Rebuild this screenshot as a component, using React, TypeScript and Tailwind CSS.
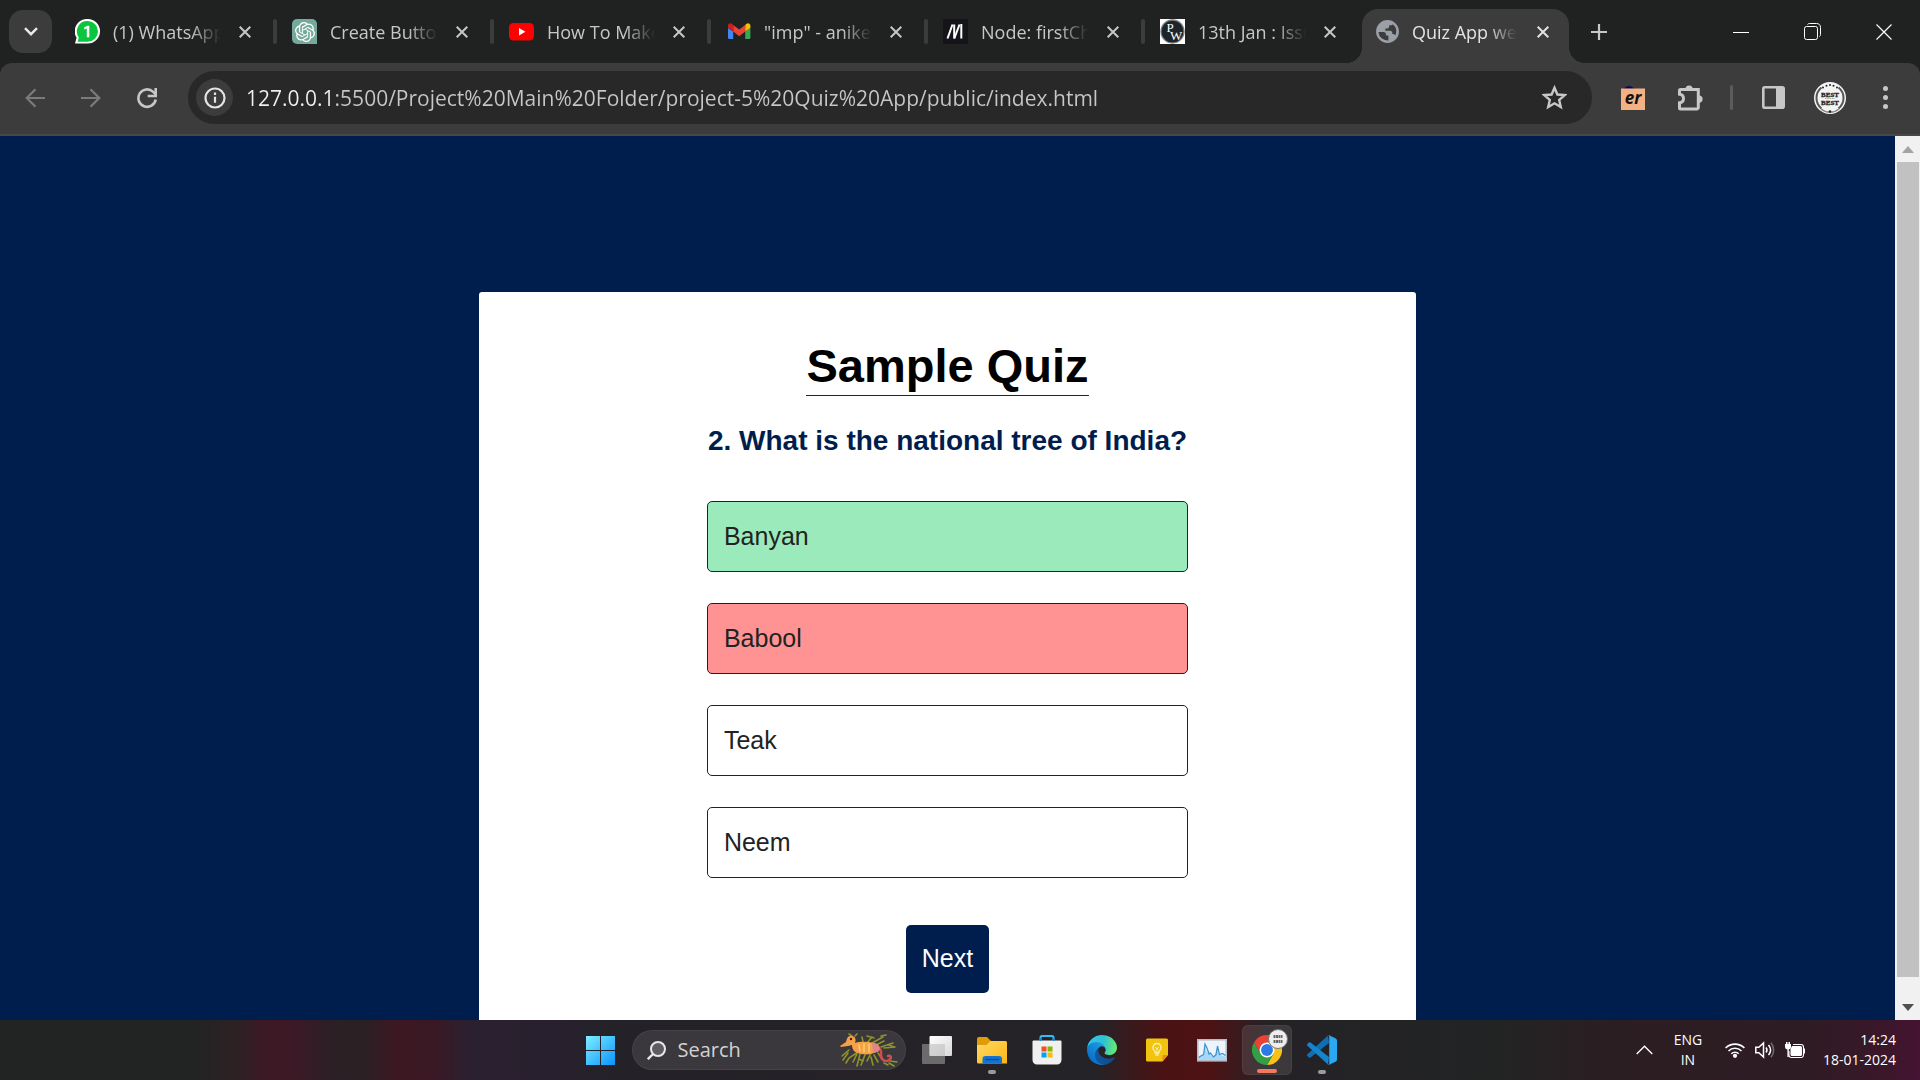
import type { ReactNode } from "react";
import { SiOpenai } from "react-icons/si";

const WhatsAppIcon = () => (
  <svg viewBox="0 0 25 25" className="h-full w-full">
    <path d="M12.5 0A12.3 12.3 0 0 1 25 12.4 12.3 12.3 0 0 1 12.5 24.6H0l1.6-5.8A12.3 12.3 0 0 1 12.5 0Z" fill="#fff" />
    <path d="M12.6 2A10.4 10.4 0 0 1 23 12.4 10.4 10.4 0 0 1 12.6 22.8H2.6l1.2-4.4A10.4 10.4 0 0 1 12.6 2Z" fill="#0ac63e" />
    <path d="M9.2 8.2l3.4-1.5h1.7v11.6h-2.5V9.6l-2.6.8Z" fill="#fff" />
  </svg>
);

const GptIcon = () => (
  <span className="flex h-full w-full items-center justify-center rounded-[5px] rounded-br-none bg-[#75a99c] text-white">
    <SiOpenai size={20} />
  </span>
);

const YoutubeIcon = () => (
  <svg viewBox="0 0 25 25" className="h-full w-full">
    <rect y="4" width="25" height="17.5" rx="4.5" fill="#f00" />
    <path d="M10 9v7.4l6.4-3.7Z" fill="#fff" />
  </svg>
);

const GmailIcon = () => (
  <svg viewBox="0 0 25 25" className="h-full w-full">
    <path d="M2 9v9.400c0 .9.7 1.600 1.600 1.600h3.600V12.400Z" fill="#4285f4" />
    <path d="M19.200 12.400V20h3.600c.9 0 1.600-.7 1.600-1.600V8.600Z" fill="#34a853" />
    <path d="M19.200 6v6.600l5.200-3.900V6.600c0-2.200-2.300-3.100-3.900-1.900Z" fill="#fbbc04" />
    <path d="M7.200 12.600V6l6 4.600 6-4.600v6.600l-6 4.600Z" fill="#ea4335" />
    <path d="M2 6.600v2.100l5.200 3.900V6L5.900 4.700C4.300 3.500 2 4.400 2 6.600Z" fill="#c5221f" />
  </svg>
);

const MdnIcon = () => (
  <svg viewBox="0 0 25 25" className="h-full w-full">
    <rect width="25" height="25" fill="#15141a" />
    <g fill="none" stroke="#fff" strokeWidth="2">
      <path d="M4.500 19.500L9.500 5.500" />
      <path d="M11.200 5.500v14" />
      <path d="M11.300 19.500L16.500 5.500" />
      <path d="M18.300 5v14.500" />
    </g>
  </svg>
);

const PwIcon = () => (
  <svg viewBox="0 0 25 25" className="h-full w-full">
    <rect width="25" height="25" fill="#fff" />
    <circle cx="12.500" cy="12.500" r="11.500" fill="#1d2529" stroke="#7b8184" strokeWidth="1.300" />
    <text x="6.500" y="12.500" fontFamily="Liberation Serif, serif" fontSize="13" fill="#fff">P</text>
    <text x="10" y="21" fontFamily="Liberation Serif, serif" fontSize="13" fill="#fff">W</text>
  </svg>
);

const GlobeIcon = () => (
  <svg viewBox="0 0 24 24" className="h-full w-full">
    <path
      fill="#9aa0a6"
      d="M12 1a11 11 0 1 0 0 22 11 11 0 0 0 0-22Zm-8.700 11.500h4.900c1.500 0 2.300 1 2.300 2.200v1.100h2.400v4.800A8.700 8.700 0 0 1 3.300 12.500Zm16.300 3.300c-.8-1-1.700-1.300-3-1.300v-1.300c0-1.200-.9-2-2.100-2H10V9h1.700c1.100 0 1.900-.8 1.900-1.900V6h2c.7 0 1.200-.4 1.400-1a8.700 8.700 0 0 1 2.600 10.800Z"
    />
  </svg>
);

const CloseIcon = () => (
  <svg viewBox="0 0 12 12" className="h-3 w-3" fill="none" stroke="currentColor" strokeWidth="2">
    <path d="M.7.7l10.600 10.600M11.300.7L.7 11.300" />
  </svg>
);

const tabs: { title: string; icon: ReactNode }[] = [
  { title: "(1) WhatsApp", icon: <WhatsAppIcon /> },
  { title: "Create Button", icon: <GptIcon /> },
  { title: "How To Make", icon: <YoutubeIcon /> },
  { title: "\"imp\" - aniket", icon: <GmailIcon /> },
  { title: "Node: firstChild", icon: <MdnIcon /> },
  { title: "13th Jan : Issue", icon: <PwIcon /> },
];

const fade = "[mask-image:linear-gradient(to_right,#000_72%,transparent)]";

function TabStrip() {
  return (
    <header className="flex h-[63px] items-center bg-[#202121] text-[#c7c7c7]">
      <button aria-label="Search tabs" className="ml-[9px] flex h-[43px] w-[43px] shrink-0 items-center justify-center rounded-[14px] bg-[#3c3c3c] text-[#e8e8e8]">
        <svg viewBox="0 0 14 9" className="h-[9px] w-[14px]" fill="none" stroke="currentColor" strokeWidth="2.400">
          <path d="M1 1.200l6 6 6-6" />
        </svg>
      </button>
      <div className="ml-2 flex min-w-0">
        {tabs.map((t) => (
          <div key={t.title} className="group flex h-[25px] w-[217px] min-w-0 items-center pl-[15px]">
            <span className="h-[25px] w-[25px] shrink-0">{t.icon}</span>
            <span className={`ml-[13px] min-w-0 flex-1 overflow-hidden whitespace-nowrap text-[18px] leading-6 ${fade}`}>{t.title}</span>
            <button aria-label={`Close ${t.title}`} className="mr-[22px] ml-[18px] shrink-0">
              <CloseIcon />
            </button>
            <span className="h-[25px] w-1 shrink-0 rounded-sm bg-[#3c3c3c] group-last:invisible" />
          </div>
        ))}
      </div>
      <div className="relative flex h-[54px] w-[207px] shrink-0 items-center self-end rounded-t-[16px] bg-[#3c3c3c] pb-[9px] pl-[13px] text-[#e3e3e3]">
        <span className="absolute bottom-0 -left-4 h-4 w-4 bg-[radial-gradient(circle_at_0_0,transparent_16px,#3c3c3c_16px)]" />
        <span className="absolute bottom-0 -right-4 h-4 w-4 bg-[radial-gradient(circle_at_100%_0,transparent_16px,#3c3c3c_16px)]" />
        <span className="h-[25px] w-[25px] shrink-0"><GlobeIcon /></span>
        <span className={`ml-3 min-w-0 flex-1 overflow-hidden whitespace-nowrap text-[18px] leading-6 ${fade}`}>Quiz App website</span>
        <button aria-label="Close Quiz App" className="mr-5 ml-5 shrink-0"><CloseIcon /></button>
      </div>
      <button aria-label="New tab" className="ml-[22px] shrink-0">
        <svg viewBox="0 0 16 16" className="h-4 w-4" stroke="currentColor" strokeWidth="2.200"><path d="M8 0v16M0 8h16" /></svg>
      </button>
      <div className="mr-7 ml-auto flex shrink-0 items-center gap-[55px] text-white">
        <button aria-label="Minimize">
          <svg viewBox="0 0 16 16" className="h-4 w-4" stroke="currentColor"><path d="M0 8.500h16" /></svg>
        </button>
        <button aria-label="Restore">
          <svg viewBox="0 0 17 17" className="h-[17px] w-[17px]" fill="none" stroke="currentColor">
            <rect x=".5" y="3.500" width="13" height="13" rx="2" />
            <path d="M3.500 1.500c.5-.7 1-1 2-1h7c2.500 0 4 1.500 4 4v7c0 1-.3 1.500-1 2" />
          </svg>
        </button>
        <button aria-label="Close window">
          <svg viewBox="0 0 16 16" className="h-4 w-4" stroke="currentColor" strokeWidth="1.200"><path d="M.5.5l15 15M15.500.5l-15 15" /></svg>
        </button>
      </div>
    </header>
  );
}

function Avatar() {
  return (
    <svg viewBox="0 0 32 32" className="h-8 w-8">
      <circle cx="16" cy="16" r="16" fill="#f4f4f4" />
      <path d="M7.500 5.500a13.500 13.500 0 0 0 0 21M24.500 5.500a13.500 13.500 0 0 1 0 21" fill="none" stroke="#555" strokeWidth="2" />
      <path d="M7 27a14 14 0 0 0 18 0" fill="none" stroke="#888" strokeWidth="1.500" />
      <g fill="#222">
        <circle cx="9" cy="5.500" r="1" />
        <circle cx="12.500" cy="3.700" r="1" />
        <circle cx="16" cy="3" r="1" />
        <circle cx="19.500" cy="3.700" r="1" />
        <circle cx="23" cy="5.500" r="1" />
        <circle cx="16" cy="29.500" r="1.300" />
      </g>
      <g fontFamily="Liberation Serif, serif" fontSize="7" fontWeight="700" fill="#222" textAnchor="middle">
        <text x="16" y="14.500" stroke="#222" strokeWidth=".3">BEST</text>
        <text x="16" y="23" stroke="#222" strokeWidth=".3">BEST</text>
      </g>
      <path d="M11 16.500h10" stroke="#999" strokeDasharray="1 .7" />
    </svg>
  );
}

function Toolbar() {
  return (
    <div className="bg-[#202121]">
      <div className="flex h-[73px] items-center rounded-t-[12px] border-b-2 border-[#474747] bg-[#3c3c3c] pt-px pb-[3px] pl-[25px] text-[#c7c7c7]">
        <button aria-label="Back" className="text-[#7b7b7b]">
          <svg viewBox="0 0 20 20" className="h-5 w-5" fill="none" stroke="currentColor" strokeWidth="2.200"><path d="M20 10H2M10.500 1.200L1.700 10l8.800 8.800" /></svg>
        </button>
        <button aria-label="Forward" className="ml-9 text-[#7b7b7b]">
          <svg viewBox="0 0 20 20" className="h-5 w-5" fill="none" stroke="currentColor" strokeWidth="2.200"><path d="M0 10h18M9.500 1.200l8.800 8.800-8.800 8.800" /></svg>
        </button>
        <button aria-label="Reload" className="ml-[35px]">
          <svg viewBox="0 0 22 22" className="h-[22px] w-[22px]" fill="none" stroke="currentColor" strokeWidth="2.600">
            <path d="M19.700 12.500A8.700 8.700 0 1 1 17.200 4.900L19.500 7.200" />
            <path d="M19.700 1v8h-8" />
          </svg>
        </button>
        <div className="ml-[30px] flex h-[53px] min-w-0 flex-1 items-center rounded-full bg-[#282828] pr-[25px] pl-2">
          <button aria-label="Site information" className="flex h-[37px] w-[37px] shrink-0 items-center justify-center rounded-full bg-[#3c3c3c] text-[#e3e3e3]">
            <svg viewBox="0 0 22 22" className="h-[22px] w-[22px]" fill="none" stroke="currentColor" strokeWidth="2.200">
              <circle cx="11" cy="11" r="9.500" />
              <path d="M11 9.800v6M11 5.600v2.400" />
            </svg>
          </button>
          <label htmlFor="address" className="sr-only">Address</label>
          <input
            id="address"
            readOnly
            value="127.0.0.1:5500/Project%20Main%20Folder/project-5%20Quiz%20App/public/index.html"
            className="ml-[13px] h-7 min-w-0 flex-1 bg-[linear-gradient(to_right,#f0f0f0_84px,#c7c7c7_84px)] bg-clip-text text-[21px] leading-7 text-transparent outline-none"
          />
          <button aria-label="Bookmark this page" className="shrink-0">
            <svg viewBox="0 0 25 25" className="h-[25px] w-[25px]" fill="none" stroke="currentColor" strokeWidth="2.400">
              <path d="M12.500 2.800l2.900 6.700 7.300.6-5.500 4.800 1.600 7.100-6.300-3.700-6.300 3.700 1.600-7.100-5.500-4.800 7.300-.6Z" />
            </svg>
          </button>
        </div>
        <button aria-label="er extension" className="ml-[29px] shrink-0">
          <svg viewBox="0 0 24 24" className="h-6 w-6">
            <path d="M3 3c2-4 8-4 10 0Z" fill="#0a0a5c" />
            <rect y="2.500" width="24" height="21.500" fill="#f4b183" />
            <text x="12" y="17.500" textAnchor="middle" fontFamily="Open Sans, sans-serif" fontSize="17" fontStyle="italic" fontWeight="700" fill="#111">er</text>
          </svg>
        </button>
        <button aria-label="Extensions" className="ml-8 shrink-0">
          <svg viewBox="0 0 27 27" className="h-[27px] w-[27px]">
            <path d="M3.500 5.500h17.800V23.500a1.500 1.500 0 0 1-1.500 1.500H3.500a1 1 0 0 1-1-1v-5.200c2.500-.3 4-2 4-4.300s-1.500-4-4-4.300V6.500a1 1 0 0 1 1-1Z" fill="none" stroke="currentColor" strokeWidth="3" />
            <path d="M8.500 5a3.600 3.600 0 0 1 7.200 0ZM22 11.500a3.600 3.600 0 0 1 0 7.200Z" fill="currentColor" />
          </svg>
        </button>
        <span className="ml-[26px] h-[25px] w-[3px] shrink-0 rounded-full bg-[#5c5c5c]" />
        <button aria-label="Side panel" className="ml-[29px] shrink-0">
          <svg viewBox="0 0 23 23" className="h-[23px] w-[23px]">
            <rect x="1.300" y="1.300" width="20.400" height="20.400" rx="1.500" fill="none" stroke="currentColor" strokeWidth="2.600" />
            <path d="M14 1h8v21h-8Z" fill="currentColor" />
          </svg>
        </button>
        <button aria-label="Profile" className="ml-[29px] shrink-0"><Avatar /></button>
        <button aria-label="Menu" className="mr-8 ml-[37px] shrink-0">
          <svg viewBox="0 0 5 23" className="h-[23px] w-[5px]" fill="currentColor">
            <circle cx="2.500" cy="2.500" r="2.500" /><circle cx="2.500" cy="11.500" r="2.500" /><circle cx="2.500" cy="20.500" r="2.500" />
          </svg>
        </button>
      </div>
    </div>
  );
}

const options = [
  { label: "Banyan", tone: "bg-[#9beabc]" },
  { label: "Babool", tone: "bg-[#ff9393]" },
  { label: "Teak", tone: "bg-white" },
  { label: "Neem", tone: "bg-white" },
];

function Quiz() {
  return (
    <main className="min-w-0 flex-1 overflow-hidden bg-[#001e4d] pt-[156px] font-['Liberation_Sans',Arial,sans-serif]">
      <section className="mx-auto flex h-full w-[937px] max-w-full flex-col items-center rounded-t-[3px] bg-white pt-[47px]">
        <h1 className="border-b border-[#1c2438] pb-[2px] text-[47px] leading-[54px] font-bold text-black">Sample Quiz</h1>
        <div className="mt-[29px] flex flex-col items-center">
          <h2 className="px-px text-[28px] leading-8 font-bold text-[#001e4d]">2. What is the national tree of India?</h2>
          <div className="mt-11 flex w-full flex-col gap-[31px]">
            {options.map((o) => (
              <button key={o.label} className={`h-[71px] rounded-[5px] border border-[#222] px-4 text-left text-[25px] text-[#222] ${o.tone}`}>
                {o.label}
              </button>
            ))}
          </div>
          <button className="mt-[47px] h-[68px] rounded-[5px] bg-[#001e4d] px-4 text-[25px] text-white">Next</button>
        </div>
      </section>
    </main>
  );
}

function Scrollbar() {
  return (
    <div className="flex w-[25px] shrink-0 flex-col items-center bg-[#f1f1f1]">
      <span className="flex h-[26px] items-center"><svg viewBox="0 0 12 7" className="h-[7px] w-3"><path d="M6 0l6 7H0Z" fill="#a3a3a3" /></svg></span>
      <span className="w-[22px] flex-1 bg-[#c1c1c1]" />
      <span className="flex h-[43px] items-end pb-[9px]"><svg viewBox="0 0 12 7" className="h-[7px] w-3"><path d="M6 7l6-7H0Z" fill="#505050" /></svg></span>
    </div>
  );
}

const WindowsLogo = () => (
  <svg viewBox="0 0 29 29" className="h-[29px] w-[29px]">
    <defs>
      <linearGradient id="win" x1="0" y1="0" x2="1" y2="1"><stop offset="0" stopColor="#7defff" /><stop offset="1" stopColor="#0a93ff" /></linearGradient>
    </defs>
    <path d="M0 0h14v14H0ZM15 0h14v14H15ZM0 15h14v14H0ZM15 15h14v14H15Z" fill="url(#win)" />
  </svg>
);

const Seadragon = () => (
  <svg viewBox="0 0 58 34" className="h-[34px] w-[58px]" fill="none" strokeLinecap="round">
    <g stroke="#8f9328" strokeWidth="1.600">
      <path d="M9 17L2 23M8 20l-5 7M18 19l-9 6-3 5M17 21l-4 8M20 21l-3 12M25 22l-4 10M31 20l-4 8M31 24l2 8M34 22l4 7M38 20l4 6" />
      <path d="M12 3L9 1M15 3l2-2M23 9l-1-5M27 10l5-6M32 10l11-6M36 12l8-4M41 14l12-4M44 15l11-1M50 28l7 1M49 30l5 3M44 30l4 2" />
      <path d="M27 3l7 2M41 3l5-1M49 12l5 2M23 28l-4-2" />
    </g>
    <path d="M37 15c5 0 4 5 4 8 1 5 5 6 8 4 3-2 2-5-1-4" stroke="#cf4d4e" strokeWidth="2.600" />
    <path d="M0 13l6-4C7 4 9 2 12 3c4 1 4 4 3 7 7-2 13-1 19 0 5 1 7 4 5 8-6 3-12 4-18 3-5-1-9-3-9-9l-4 1-7 1Z" fill="#f6a047" />
    <path d="M32 10c5 0 8 3 7 8l-6 2Z" fill="#df848e" />
    <path d="M19 12l1 6M24 11v8M29 11v8" stroke="#fbd06b" strokeWidth="1.500" />
    <circle cx="11" cy="6" r="1.200" fill="#4a1f10" />
  </svg>
);

const TaskView = () => (
  <svg viewBox="0 0 30 30" className="h-[30px] w-[30px]">
    <defs><linearGradient id="tv" x1="0" y1="0" x2="1" y2="1"><stop offset="0" stopColor="#fff" /><stop offset="1" stopColor="#d8d8d8" /></linearGradient></defs>
    <rect y="9" width="23" height="20" rx="1" fill="#6b6b6c" />
    <rect x="7.500" y="1" width="22.500" height="20" rx="1" fill="url(#tv)" />
    <path d="M7.500 9H23v12H8.500a1 1 0 0 1-1-1Z" fill="#bbb" opacity=".55" />
  </svg>
);

const Folder = () => (
  <svg viewBox="0 0 30 30" className="h-[30px] w-[30px]">
    <defs><linearGradient id="fo" x1="0" y1="0" x2="1" y2="1"><stop offset="0" stopColor="#ffd968" /><stop offset="1" stopColor="#fbb711" /></linearGradient></defs>
    <path d="M0 4a2 2 0 0 1 2-2h8l4 4-3 5H0Z" fill="#e19b06" />
    <path d="M0 10h9.500l4-4H28.500A1.500 1.500 0 0 1 30 7.500V28.500H1.500A1.500 1.500 0 0 1 0 27Z" fill="url(#fo)" />
    <path d="M5.500 28.500V24a3 3 0 0 1 3-3h13.500a3 3 0 0 1 3 3v4.500Z" fill="#1273d3" />
    <path d="M9 24.500h12.500" stroke="#0c4e96" strokeWidth="1.500" strokeLinecap="round" />
  </svg>
);

const Store = () => (
  <svg viewBox="0 0 30 30" className="h-[30px] w-[30px]">
    <path d="M8.500 7V2.500A1.500 1.500 0 0 1 10 1h10a1.500 1.500 0 0 1 1.500 1.500V7" fill="none" stroke="#35bdf2" strokeWidth="2" />
    <path d="M1.500 5.500h27A1 1 0 0 1 29.500 6.500V25a4.500 4.500 0 0 1-4.500 4.500H5A4.500 4.500 0 0 1 .5 25V6.500A1 1 0 0 1 1.500 5.500Z" fill="#f0f0f0" />
    <path d="M8.500 3v3M21.500 3v3" stroke="#1689cf" strokeWidth="2" />
    <path d="M9.500 11.500h5v5h-5Z" fill="#f25022" /><path d="M15.500 11.500h5v5h-5Z" fill="#7fba00" />
    <path d="M9.500 17.500h5v5h-5Z" fill="#00a4ef" /><path d="M15.500 17.500h5v5h-5Z" fill="#ffb900" />
  </svg>
);

const Edge = () => (
  <svg viewBox="0 0 256 256" className="h-[30px] w-[30px]">
    <defs>
      <linearGradient id="e1" x1="63" y1="178" x2="241" y2="178" gradientUnits="userSpaceOnUse"><stop offset="0" stopColor="#0c59a4" /><stop offset="1" stopColor="#114a8b" /></linearGradient>
      <linearGradient id="e2" x1="157" y1="100" x2="46" y2="221" gradientUnits="userSpaceOnUse"><stop offset="0" stopColor="#1b9de2" /><stop offset="1" stopColor="#0d6fc8" /></linearGradient>
      <linearGradient id="e3" x1="20" y1="60" x2="250" y2="100" gradientUnits="userSpaceOnUse"><stop offset="0" stopColor="#35c1f1" /><stop offset=".5" stopColor="#2cc3d2" /><stop offset="1" stopColor="#66eb6e" /></linearGradient>
    </defs>
    <path fill="url(#e1)" d="M231 190.500c-3.400 1.800-6.900 3.400-10.500 4.700a101.900 101.900 0 0 1-35.900 6.400c-47.300 0-88.500-32.500-88.500-74.300a31.500 31.500 0 0 1 16.400-27.300c-42.800 1.800-53.800 46.400-53.800 72.500 0 74 68.100 81.400 82.800 81.400 7.900 0 19.800-2.300 27-4.600l1.300-.4a128.300 128.300 0 0 0 66.600-52.800 4 4 0 0 0-5.400-5.600Z" />
    <path fill="url(#e2)" d="M105.700 241.400a79.200 79.200 0 0 1-22.700-21.300 80.700 80.700 0 0 1 29.500-120c3.200-1.500 8.500-4.100 15.600-4a32.400 32.400 0 0 1 25.700 13 31.900 31.900 0 0 1 6.300 18.700c0-.2 24.500-79.600-80-79.600-43.900 0-80 41.600-80 78.200a130.200 130.200 0 0 0 12.100 56 128 128 0 0 0 156.400 67 75.500 75.500 0 0 1-62.800-8Z" />
    <path fill="url(#e3)" d="M152.300 148.900c-.9 1-3.400 2.500-3.400 5.600 0 2.600 1.700 5.200 4.800 7.300 14.300 10 41.400 8.600 41.500 8.600a59.600 59.600 0 0 0 30.300-8.300 61.400 61.400 0 0 0 30.400-52.900c.3-22.400-8-37.300-11.300-43.900C223.500 23.900 177.700 0 128 0A128 128 0 0 0 0 126.200c.5-36.500 36.800-66 80-66 3.500 0 23.500.3 42 10a72.600 72.600 0 0 1 30.900 29.300c6.100 10.600 7.200 24.100 7.200 29.500s-2.700 13.300-7.800 19.900Z" />
  </svg>
);

const Keep = () => (
  <svg viewBox="0 0 30 30" className="h-[30px] w-[30px]">
    <path d="M5.500 3.500h19A1.500 1.500 0 0 1 26 5v15l-5.500 6.500h-15A1.500 1.500 0 0 1 4 25V5a1.500 1.500 0 0 1 1.500-1.500Z" fill="#f1c40f" />
    <path d="M26 20l-5.500 6.500V21a1 1 0 0 1 1-1Z" fill="#f08a1d" />
    <path d="M15 8.500a4 4 0 0 0-2.400 7.200l.6 2.300h3.600l.6-2.300A4 4 0 0 0 15 8.500ZM13.500 20h3" fill="none" stroke="#fff0b0" strokeWidth="1.300" />
    <path d="M13.300 12l1.700 2 1.700-2M15 14v4" fill="none" stroke="#fff0b0" />
  </svg>
);

const Perf = () => (
  <svg viewBox="0 0 30 30" className="h-[30px] w-[30px]">
    <rect x=".8" y="4.800" width="28.400" height="21" fill="#edf4fb" stroke="#b9bcc6" strokeWidth="1.600" />
    <path d="M1.600 22.500l3-2 2-1L8 9l2 9 1.500-3 3.500 6.500 2-1 1.500-3L20.500 11l2 8.500 3 1 3 1v3.500H1.600Z" fill="#a5d8f8" />
    <path d="M1.600 22.500l3-2 2-1L8 9l2 4 2 6 1.500-1 3 4 2.500-2L20.500 11l2 8.500 3-1 3 2" fill="none" stroke="#3f8fc9" strokeWidth="1.200" />
  </svg>
);

const Chrome = () => (
  <span className="relative block h-[30px] w-[30px]">
    <svg viewBox="0 0 48 48" className="h-[30px] w-[30px]">
      <path d="M24 12h20.800a24 24 0 0 0-41.600 0l10.400 18Z" fill="#ea4335" />
      <path d="M34.400 30L24 48a24 24 0 0 0 20.800-36H24Z" fill="#fbc116" />
      <path d="M13.600 30L3.200 12A24 24 0 0 0 24 48l10.400-18Z" fill="#34a045" />
      <circle cx="24" cy="24" r="12" fill="#fff" />
      <circle cx="24" cy="24" r="9.500" fill="#2c7be5" />
    </svg>
    <svg viewBox="0 0 20 20" className="absolute -top-[6px] -right-[6px] h-5 w-5">
      <circle cx="10" cy="10" r="9.500" fill="#eee" stroke="#777" />
      <path d="M5.500 7.500h9M5.500 12.500h9" stroke="#666" strokeWidth="3" strokeDasharray="2 .5" />
    </svg>
  </span>
);

const VsCode = () => (
  <svg viewBox="0 0 30 30" className="h-[30px] w-[30px]">
    <path d="M22 8L3.500 22.500a1.200 1.200 0 0 1-1.600 0L.4 21.100a1.200 1.200 0 0 1 0-1.800L21 .5Z" fill="#0f6fb5" />
    <path d="M22 22L3.500 7.500a1.200 1.200 0 0 0-1.600 0L.4 8.900a1.200 1.200 0 0 0 0 1.800L21 29.500Z" fill="#1484cc" />
    <path d="M21.500 29.900c-.6 0-1-.2-1.300-.6.900.8 2 .2 2-.8V1.500c0-1-1.200-1.600-2-.8.500-.6 1.300-.8 2-.5l6.200 3c.9.400 1.600 1.300 1.600 2.300v19c0 1-.6 1.900-1.600 2.300l-6.200 3c-.2.100-.5.100-.7.100Z" fill="#2aa8f2" />
  </svg>
);

const apps: { name: string; icon: ReactNode; mark?: string; tile?: string }[] = [
  { name: "Task view", icon: <TaskView /> },
  { name: "File Explorer", icon: <Folder />, mark: "w-2 bg-[#9b9b9b]" },
  { name: "Microsoft Store", icon: <Store /> },
  { name: "Edge", icon: <Edge /> },
  { name: "Keep", icon: <Keep /> },
  { name: "Performance", icon: <Perf /> },
  { name: "Chrome", icon: <Chrome />, mark: "w-5 bg-[#f4795f]", tile: "border border-white/5 bg-white/10" },
  { name: "Visual Studio Code", icon: <VsCode />, mark: "w-2 bg-[#9b9b9b]" },
];

function Taskbar() {
  return (
    <footer className="grid h-[60px] shrink-0 grid-cols-[1fr_auto_1fr] items-center bg-[linear-gradient(to_right,#222323_0%,#222323_10%,#2e2124_12.500%,#3d1825_13.800%,#3d1825_15%,#2a2025_17.500%,#2b2024_19%,#3c1822_20.500%,#3a1824_22.500%,#2b2030_24.500%,#28202e_29%,#242228_32%,#242327_57%,#4a1214_60.500%,#4d1214_63%,#272226_66%,#242226_68%,#222424_78%,#2b1e22_84%,#2e1c24_94%,#3a1729_98%,#451333_100%)] pl-3 text-white">
      <span />
      <div className="flex items-center">
        <button aria-label="Start" className="shrink-0"><WindowsLogo /></button>
        <label className="ml-[17px] flex h-10 w-[274px] shrink-0 items-center rounded-full border border-white/5 bg-[#3a383c] pr-[7px] pl-[14px]">
          <svg viewBox="0 0 19 19" className="h-[19px] w-[19px] shrink-0" fill="none" stroke="#e8e8e8" strokeWidth="2">
            <circle cx="11" cy="8" r="7" fill="#5d5c60" /><path d="M6 13L.8 18.200" strokeWidth="2.400" />
          </svg>
          <input type="search" placeholder="Search" className="ml-3 w-0 min-w-0 flex-1 bg-transparent text-[20px] leading-7 outline-none placeholder:text-[#d2d2d2]" />
          <Seadragon />
        </label>
        <div className="ml-[6px] flex gap-[5px]">
          {apps.map((a) => (
            <button key={a.name} aria-label={a.name} className={`relative flex h-[50px] w-[50px] items-center justify-center rounded-[6px] ${a.tile ?? ""}`}>
              {a.icon}
              {a.mark && <span className={`absolute bottom-px left-1/2 h-1 -translate-x-1/2 rounded-full ${a.mark}`} />}
            </button>
          ))}
        </div>
      </div>
      <div className="flex items-center justify-end pr-6 text-[14px] leading-5">
        <button aria-label="Show hidden icons">
          <svg viewBox="0 0 17 10" className="h-[10px] w-[17px]" fill="none" stroke="currentColor" strokeWidth="1.400"><path d="M.7 9l7.800-7.800L16.300 9" /></svg>
        </button>
        <button className="ml-5 w-[30px] text-center">ENG<br />IN</button>
        <button aria-label="Network, volume and battery" className="ml-[22px] flex items-center gap-[10px]">
          <svg viewBox="0 0 20 16" className="h-4 w-5" fill="none" stroke="currentColor" strokeWidth="1.600">
            <path d="M.6 6a13.300 13.300 0 0 1 18.800 0M3.500 9a9.200 9.200 0 0 1 13 0M6.300 11.800a5.200 5.200 0 0 1 7.400 0" />
            <circle cx="10" cy="13.800" r="1.300" fill="currentColor" />
          </svg>
          <svg viewBox="0 0 20 18" className="h-[18px] w-5" fill="none" stroke="currentColor" strokeWidth="1.500">
            <path d="M.8 6.200h3L8.500 2v14l-4.700-4.200h-3Z" />
            <path d="M11 6.500c1.200 1.500 1.200 3.500 0 5M13.500 4c2.500 3 2.500 7 0 10" />
            <path d="M16 1.800c3.500 4.200 3.500 10.200 0 14.400" opacity=".35" />
          </svg>
          <svg viewBox="0 0 20 16" className="h-4 w-5" fill="currentColor">
            <path d="M7 4h8.500A1.500 1.500 0 0 1 17 5.500v7a1.500 1.500 0 0 1-1.500 1.500H7a1.500 1.500 0 0 1-1.500-1.500V7Z" />
            <path d="M8 2.500h8a2.500 2.500 0 0 1 2.500 2.500v8a2.500 2.500 0 0 1-2.500 2.500H6.500A2.500 2.500 0 0 1 4 13V9" fill="none" stroke="currentColor" strokeWidth="1.100" />
            <path d="M18.500 6.500h1.500v5h-1.500ZM0 2h1V0h1.500v2h1V0H5v2h1v3a2.500 2.500 0 0 1-2.200 2.500V15H2.400V7.500A2.500 2.500 0 0 1 0 5Z" />
          </svg>
        </button>
        <button className="ml-[18px] text-right whitespace-nowrap">14:24<br />18-01-2024</button>
      </div>
    </footer>
  );
}

export default function App() {
  return (
    <div className="flex h-screen flex-col overflow-hidden font-['Open_Sans','Noto_Sans',sans-serif]">
      <TabStrip />
      <Toolbar />
      <div className="flex min-h-0 flex-1">
        <Quiz />
        <Scrollbar />
      </div>
      <Taskbar />
    </div>
  );
}
